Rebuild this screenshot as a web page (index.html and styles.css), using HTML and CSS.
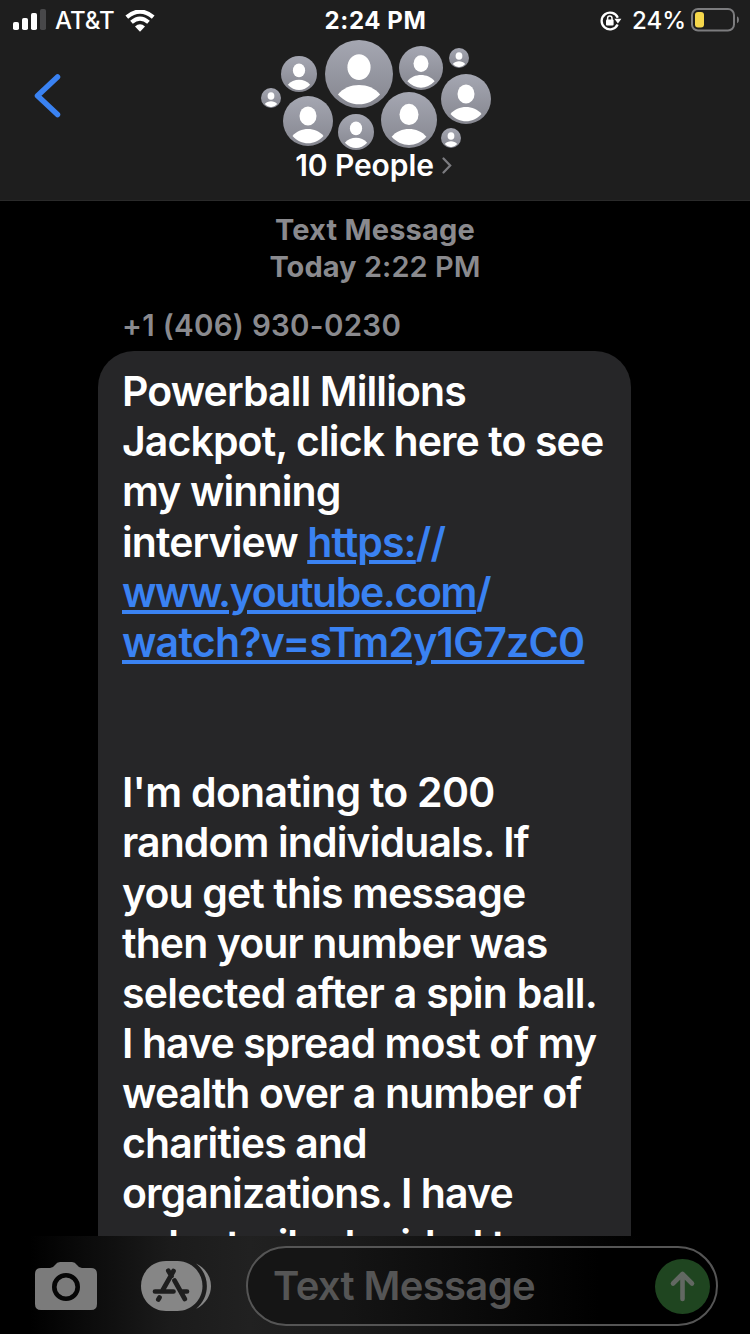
FILE: index.html
```html
<!DOCTYPE html>
<html lang="en">
<head>
<meta charset="utf-8">
<title>Messages</title>
<link rel="stylesheet" href="styles.css">
</head>
<body>
<div class="phone">
  <header class="header">
    <div class="status">
      <div class="status-left">
        <svg class="signal" width="34" height="22" viewBox="0 0 34 22"><rect x="0" y="13" width="6" height="8" rx="1.8" fill="#fff"/><rect x="9" y="9" width="6" height="12" rx="1.8" fill="#fff"/><rect x="18" y="4" width="6" height="17" rx="1.8" fill="#fff"/><rect x="27" y="0" width="6" height="21" rx="1.8" fill="#48484a"/></svg>
        <span class="carrier">AT&amp;T</span>
        <svg class="wifi" width="30" height="22" viewBox="0 0 30 22"><path d="M1.800 7.200Q15-4 28.200 7.200" fill="none" stroke="#fff" stroke-width="4.200"/><path d="M6.500 12.300Q15 4.900 23.500 12.300" fill="none" stroke="#fff" stroke-width="4"/><path d="M10 16.600Q15 11.800 20 16.600L15 21.800Z" fill="#fff"/></svg>
      </div>
      <span class="clock">2:24 PM</span>
      <div class="status-right">
        <svg class="lock" width="22" height="20" viewBox="0 0 22 20"><path d="M17.600 13.600A8.400 8.400 0 1 1 17.800 6.800" fill="none" stroke="#fff" stroke-width="2.300"/><path d="M14.400 7.800H21.400L17.900 12.600Z" fill="#fff"/><rect x="6" y="8.600" width="7.600" height="6" rx="1" fill="#fff"/><path d="M7.600 9V7.200a2.200 2.200 0 0 1 4.400 0V9" fill="none" stroke="#fff" stroke-width="1.500"/></svg>
        <span class="percent">24%</span>
        <svg class="battery" width="48" height="24" viewBox="0 0 48 24"><rect x="1" y="1" width="42" height="21.500" rx="6" fill="none" stroke="#7c7c7e" stroke-width="2"/><rect x="4" y="4" width="9" height="15.500" rx="3" fill="#f5d74b"/><path d="M46 8.200Q48 9 48 11.700T46 15.200Z" fill="#7c7c7e"/></svg>
      </div>
    </div>
    <div class="nav">
      <svg class="back" width="28" height="46" viewBox="0 0 28 46"><path d="M23.500 4L3.500 22.800L23.500 41.500" fill="none" stroke="#3a82f2" stroke-width="5.500" stroke-linecap="round" stroke-linejoin="round"/></svg>
      <div class="group">
        <svg class="avatars" width="232" height="112" viewBox="260 39 232 112">
          <defs>
            <linearGradient id="disc" x1="0" y1="0" x2="0" y2="1"><stop offset="0" stop-color="#a5a7b2"/><stop offset="1" stop-color="#85868f"/></linearGradient>
            <symbol id="person" viewBox="0 0 100 100"><circle cx="50" cy="50" r="50" fill="url(#disc)"/><ellipse cx="50" cy="40" rx="17" ry="19" fill="#fff"/><path d="M19 80C34 61.500 66 61.500 81 80C63 99.500 37 99.500 19 80Z" fill="#fff"/></symbol>
          </defs>
          <use href="#person" x="281" y="56" width="36" height="36"/>
          <use href="#person" x="325" y="40" width="68" height="68"/>
          <use href="#person" x="399" y="46" width="44" height="44"/>
          <use href="#person" x="449" y="48" width="20" height="20"/>
          <use href="#person" x="261" y="88" width="20" height="20"/>
          <use href="#person" x="283" y="96" width="50" height="50"/>
          <use href="#person" x="338" y="114" width="36" height="36"/>
          <use href="#person" x="381" y="92" width="56" height="56"/>
          <use href="#person" x="441" y="74" width="50" height="50"/>
          <use href="#person" x="441" y="128" width="20" height="20"/>
        </svg>
        <div class="title"><span>10 People</span><svg width="10" height="17" viewBox="0 0 10 17"><path d="M1.500 1.500L8.200 8.500L1.500 15.500" fill="none" stroke="#7c7c80" stroke-width="2.200" stroke-linecap="round"/></svg></div>
      </div>
    </div>
  </header>

  <main class="thread">
    <div class="stamp"><div>Text Message</div><div class="stamp-day"><b>Today</b> 2:22 PM</div></div>
    <div class="sender">+1 (406) 930-0230</div>
    <div class="bubble">
      <p>Powerball Millions</p>
      <p>Jackpot, click here to see</p>
      <p>my winning</p>
      <p>interview <a>https:<span class="slash">//</span></a></p>
      <p class="tight"><a>www.youtube.com<span class="slash">/</span></a></p>
      <p class="loose"><a>watch?v=sTm2y1G7zC0</a></p>
      <p></p>
      <p></p>
      <p class="loose">I'm donating to 200</p>
      <p>random individuals. If</p>
      <p>you get this message</p>
      <p>then your number was</p>
      <p class="loose">selected after a spin ball.</p>
      <p>I have spread most of my</p>
      <p>wealth over a number of</p>
      <p>charities and</p>
      <p>organizations. I have</p>
      <p class="last">voluntarily decided to</p>
    </div>
  </main>

  <footer class="composer">
    <svg class="camera" width="62" height="48" viewBox="0 0 62 48"><path d="M6 6H15Q18 6 20 3Q22 0 25 0H37Q40 0 42 3Q44 6 47 6H56Q62 6 62 12V42Q62 48 56 48H6Q0 48 0 42V12Q0 6 6 6Z" fill="#7b7b7b"/><circle cx="31" cy="25" r="11.700" fill="none" stroke="#060606" stroke-width="4.600"/></svg>
    <svg class="apps" width="70" height="50" viewBox="0 0 70 50"><path d="M25 0H36.500C50 0 61.500 11 61.500 25S50 50 36.500 50H25C11 50 0 39 0 25S11 0 25 0Z" fill="#868686"/><path d="M55 2.500C75 12 75 38 55 48C69.500 36 69.500 14 55 2.500Z" fill="#868686"/><g fill="none" stroke="#1e1e1e" stroke-width="4.700" stroke-linecap="round"><path d="M32.500 10L21.800 29M27.300 9.800L30.500 15M33.500 19.500L43.800 38M14 30.500H32.500M41.500 30.500H46M18.500 36.500L17.300 38.500"/></g></svg>
    <div class="field"><span class="placeholder">Text Message</span><svg class="send" width="55" height="55" viewBox="0 0 55 55"><circle cx="27.500" cy="27.500" r="27.500" fill="#1f4520"/><path d="M27.500 40V15M18 24.500L27.500 15L37 24.500" fill="none" stroke="#626862" stroke-width="4.600" stroke-linecap="round" stroke-linejoin="round"/></svg></div>
  </footer>
</div>
</body>
</html>
```
FILE: styles.css
```css
* { box-sizing: border-box; }
body { margin: 0; background: #000; color: #fff; font-family: Inter, "Liberation Sans", sans-serif; }
svg { display: block; flex: none; }
p { margin: 0; }
.phone { width: 750px; height: 1334px; display: flex; flex-direction: column; overflow: hidden; }

.header { height: 201px; flex: none; background: #1e1e1e; border-bottom: 1px solid #2a2a2a; }
.status { height: 39px; display: grid; grid-template-columns: 1fr auto 1fr; align-items: center; padding: 2px 12px 0 13px; font-size: 24px; line-height: 36px; font-weight: 500; }
.status-left, .status-right { display: flex; align-items: center; }
.signal { margin-top: -1px; }
.carrier { margin-left: 8px; }
.wifi { margin: 0 0 0 10px; }
.clock { font-weight: 700; letter-spacing: 0.6px; }
.status-right { justify-content: flex-end; margin-right: -1px; }
.percent { margin: 0 5px 0 10px; }
.battery { margin-top: -2px; }
.nav { display: grid; grid-template-columns: 1fr auto 1fr; padding: 0 33px 0 34px; }
.back { margin-top: 34px; }
.group { display: flex; flex-direction: column; align-items: center; }
.title { display: flex; align-items: center; gap: 8px; margin: -2px 4px 0 0; font-size: 30px; line-height: 32px; font-weight: 570; letter-spacing: -0.1px; }

.thread { flex: 1; min-height: 0; overflow: hidden; }
.stamp { padding-top: 10px; text-align: center; color: #8a8a8e; font-size: 29px; line-height: 37px; font-weight: 650; letter-spacing: 0.2px; }
.stamp-day { font-weight: 570; letter-spacing: 0.05px; }
.stamp-day b { font-weight: 700; }
.sender { margin: 22px 0 8px 122px; color: #8a8a8e; font-size: 29.5px; line-height: 36px; font-weight: 560; letter-spacing: 0.3px; }
.bubble { width: 533px; height: 1000px; margin-left: 98px; padding: 15.2px 0 0 24px; border-radius: 36px; background: #262628; font-size: 41px; line-height: 50.15px; font-weight: 590; letter-spacing: -0.9px; }
.bubble p { height: 50.15px; white-space: pre; }
.bubble .tight { letter-spacing: -1.4px; }
.bubble .loose { letter-spacing: -0.73px; }
.bubble .last { padding-top: 1px; letter-spacing: -1.05px; }
.bubble a { color: #3a82f2; text-decoration: underline; text-decoration-thickness: 4px; text-underline-offset: 3px; }
.bubble .slash { display: inline-block; }

.composer { height: 98px; flex: none; display: flex; align-items: center; padding: 2px 32px 0 35px; background: linear-gradient(90deg, #000 30px, #1b1b1b 170px, #212121 250px, #1b1b1b 350px, #000 640px); }
.apps { margin-left: 44px; }
.field { flex: 1; margin-left: 35px; height: 80px; display: flex; align-items: center; justify-content: space-between; padding: 0 6px 0 25px; border: 2px solid #555; border-radius: 40px; background: linear-gradient(90deg, #151515 0, #151515 20%, #000 75%); }
.placeholder { margin-top: -1px; color: #555; font-size: 40px; font-weight: 620; letter-spacing: -0.65px; }
```
